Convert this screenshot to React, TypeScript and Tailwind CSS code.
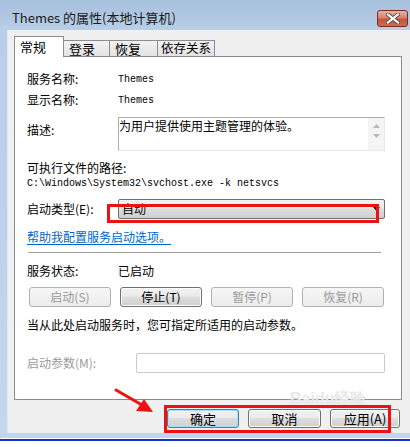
import React from "react";

function WinButton({
  children,
  w,
  disabled,
  isDefault,
  h = "h-[20px]",
}: {
  children: React.ReactNode;
  w: string;
  disabled?: boolean;
  isDefault?: boolean;
  h?: string;
}) {
  const base = `${w} ${h} flex items-center justify-center rounded-[3px] text-[12px] leading-none`;
  if (disabled) {
    return (
      <div className={`${base} border border-[#adb2b5] bg-[linear-gradient(#f6f6f6,#ececec)] text-[#9a9a9a]`}>
        {children}
      </div>
    );
  }
  if (isDefault) {
    return (
      <div className={`${base} border border-[#3c7fb1] bg-[linear-gradient(#f2f2f2_0%,#ebebeb_45%,#dddddd_50%,#cfcfcf_100%)] text-black shadow-[inset_0_0_0_1px_#a6e1f8]`}>
        {children}
      </div>
    );
  }
  return (
    <div className={`${base} border border-[#707070] bg-[linear-gradient(#f2f2f2_0%,#ebebeb_45%,#dddddd_50%,#cfcfcf_100%)] text-black shadow-[inset_0_0_0_1px_#fcfcfc]`}>
      {children}
    </div>
  );
}

export default function App() {
  return (
    <div className="relative w-[410px] h-[447px] overflow-hidden bg-white text-black text-[12px] font-['Noto_Sans_CJK_SC',sans-serif] flex flex-col">
      {/* window frame */}
      <div className="h-[433px] flex flex-col bg-[linear-gradient(180deg,#a6bfdc_0px,#b9cfe8_30px,#c3d7ee_100%)]">
        {/* title bar */}
        <div className="h-[30px] flex items-start">
          <div className="pl-[12px] pt-[9px] text-[13px] leading-[18px] text-[#1b1b1b]">
            Themes 的属性(本地计算机)
          </div>
          <div className="ml-auto mt-[10px] mr-[2px] w-[31px] h-[17px] rounded-[3px] border border-[#7d2a21] bg-[linear-gradient(#eab0a2_0%,#d8826e_45%,#c4553d_55%,#cf6d4d_100%)] flex items-center justify-center">
            <svg width="14" height="11" viewBox="0 0 14 11">
              <path d="M2 1.5 L12 9.5 M12 1.5 L2 9.5" stroke="#5a4a48" strokeWidth="4" strokeLinecap="square" />
              <path d="M2 1.5 L12 9.5 M12 1.5 L2 9.5" stroke="#ffffff" strokeWidth="2.2" strokeLinecap="square" />
            </svg>
          </div>
        </div>
        {/* body */}
        <div className="flex-1 ml-[7px] bg-[#f0f0f0] border-l border-[#dfe8f3] pl-[6px] pr-[8px] pt-[6px] flex flex-col">
          {/* tabs */}
          <div className="h-[20px] flex items-end text-[13px]">
            <div className="relative z-10 -mb-px w-[50px] h-[21px] bg-white border border-b-0 border-[#898c95] flex items-start pl-[5px] pt-[1px] leading-[18px]">
              常规
            </div>
            <div className="w-[46px] h-[16px] border border-b-0 border-l-0 border-[#898c95] bg-[linear-gradient(#f2f2f2,#e3e3e3)] flex items-center pl-[5px] leading-none">
              登录
            </div>
            <div className="w-[48px] h-[16px] border border-b-0 border-l-0 border-[#898c95] bg-[linear-gradient(#f2f2f2,#e3e3e3)] flex items-center pl-[5px] leading-none">
              恢复
            </div>
            <div className="w-[57px] h-[16px] border border-b-0 border-l-0 border-[#898c95] bg-[linear-gradient(#f2f2f2,#e3e3e3)] flex items-center pl-[3px] leading-none whitespace-nowrap text-[12.5px]">
              依存关系
            </div>
          </div>
          {/* panel */}
          <div className="h-[344px] bg-white border border-[#898c95] pl-[12px] flex flex-col">
            <div className="mt-[13px] h-[18px] flex items-center">
              <div className="w-[91px]">服务名称:</div>
              <div className="font-['Liberation_Mono',monospace] text-[10px]">Themes</div>
            </div>
            <div className="mt-[3px] h-[18px] flex items-center">
              <div className="w-[91px]">显示名称:</div>
              <div className="font-['Liberation_Mono',monospace] text-[10px]">Themes</div>
            </div>
            <div className="mt-[8px] flex items-start">
              <div className="w-[91px] mt-[4px] h-[18px] flex items-center">描述:</div>
              <div className="w-[267px] h-[34px] border border-[#abadb3] border-r-[#e3e9ef] border-b-[#e3e9ef] bg-white flex">
                <div className="flex-1 leading-[16px]">为用户提供使用主题管理的体验。</div>
                <div className="w-[16px] h-full bg-[#f4f4f4] flex flex-col items-center justify-start pt-[6px] gap-[6px]">
                  <svg width="7" height="4" viewBox="0 0 7 4">
                    <path d="M0 4 L3.5 0 L7 4 Z" fill="#b8b8b8" />
                  </svg>
                  <svg width="7" height="4" viewBox="0 0 7 4">
                    <path d="M0 0 L3.5 4 L7 0 Z" fill="#b8b8b8" />
                  </svg>
                </div>
              </div>
            </div>
            <div className="mt-[9px] h-[16px] flex items-center">可执行文件的路径:</div>
            <div className="h-[14px] flex items-center font-['Liberation_Mono',monospace] text-[10px]">
              C:\Windows\System32\svchost.exe -k netsvcs
            </div>
            <div className="mt-[9px] h-[20px] flex items-center">
              <div className="w-[91px]">启动类型(E):</div>
              <div className="w-[267px] h-[20px] rounded-[2px] border border-[#707070] bg-[linear-gradient(#f2f2f2_0%,#ebebeb_45%,#dddddd_50%,#cfcfcf_100%)] flex items-center pl-[3px] pr-[4px]">
                <span className="flex-1">自动</span>
                <svg width="7" height="4" viewBox="0 0 7 4">
                  <path d="M0 0 L3.5 4 L7 0 Z" fill="#000" />
                </svg>
              </div>
            </div>
            <div className="mt-[10px] h-[16px] flex items-center">
              <span className="text-[#0066cc] underline underline-offset-2">帮助我配置服务启动选项。</span>
            </div>
            <div className="mt-[7px] ml-[1px] w-[353px] h-px bg-[#a0a0a0]" />
            <div className="mt-[9px] h-[18px] flex items-center">
              <div className="w-[91px]">服务状态:</div>
              <div>已启动</div>
            </div>
            <div className="mt-[7px] ml-[2px] w-[355px] flex justify-between">
              <WinButton w="w-[82px]" disabled>启动(S)</WinButton>
              <WinButton w="w-[82px]">停止(T)</WinButton>
              <WinButton w="w-[82px]" disabled>暂停(P)</WinButton>
              <WinButton w="w-[82px]" disabled>恢复(R)</WinButton>
            </div>
            <div className="mt-[10px] h-[16px] flex items-center">当从此处启动服务时，您可指定所适用的启动参数。</div>
            <div className="mt-[20px] h-[20px] flex items-center">
              <div className="w-[109px] text-[#9a9a9a]">启动参数(M):</div>
              <div className="w-[249px] h-[20px] border border-[#c9cbd0] rounded-[2px] bg-white" />
            </div>
          </div>
          {/* bottom buttons */}
          <div className="mt-[9px] flex items-start">
            <div className="ml-auto mr-[2px] flex gap-[9px]">
              <WinButton w="w-[72px]" h="h-[19px]" isDefault>
                <span className="text-[13px]">确定</span>
              </WinButton>
              <WinButton w="w-[73px]" h="h-[19px]">
                <span className="text-[13px]">取消</span>
              </WinButton>
              <WinButton w="w-[70px]" h="h-[19px]">
                <span className="text-[13px]">应用(A)</span>
              </WinButton>
            </div>
          </div>
        </div>
      </div>
      <div className="h-[5px] bg-[#c3d5ec]" />
      <div className="mt-[1px] h-[2px] bg-[#1a2fd0]" />
      <div className="flex-1 bg-white" />

      {/* watermark */}
      <div className="absolute left-[290px] top-[391px] text-[16px] font-bold text-[#e8e8e8] leading-none font-['Liberation_Sans',sans-serif]">
        Baidu经验
      </div>

      {/* annotation overlays */}
      <div className="absolute left-[107px] top-[204px] w-[272px] h-[19px] border-[3px] border-[#ee1111]" />
      <div className="absolute left-[164px] top-[405px] w-[227px] h-[28px] border-[3px] border-[#ee1111]" />
      <svg className="absolute left-[112px] top-[385px]" width="46" height="32" viewBox="0 0 46 32">
        <path d="M4 5 L30 20" stroke="#ee1111" strokeWidth="3" strokeLinecap="round" />
        <path d="M41 27 L24 26 L32 14 Z" fill="#ee1111" />
      </svg>
    </div>
  );
}
